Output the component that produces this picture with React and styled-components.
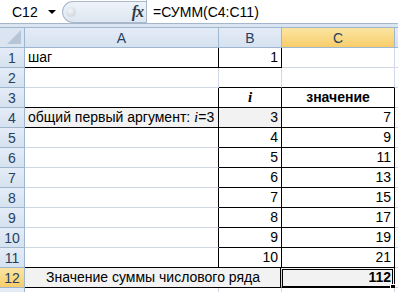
import styled, { createGlobalStyle, css } from "styled-components";

const GlobalStyle = createGlobalStyle`
  body {
    margin: 0;
    overflow: hidden;
    background: #fff;
    font-family: "Liberation Sans", Arial, sans-serif;
  }
`;

const Window = styled.div`
  width: 398px;
  height: 292px;
  overflow: hidden;
  background: #dbe5f1;
`;

const FormulaBar = styled.div`
  display: flex;
  height: 23px;
  background: #fff;
  border-bottom: 1px solid #a6b6ca;
`;

const NameBox = styled.div`
  width: 60px;
  display: flex;
  align-items: center;
  padding-left: 12px;
  box-sizing: border-box;
  font-size: 14px;
  color: #000;
`;

const DropArrow = styled.span`
  margin-left: auto;
  margin-right: 4px;
  width: 0;
  height: 0;
  border-left: 4px solid transparent;
  border-right: 4px solid transparent;
  border-top: 4px solid #000;
`;

const ButtonPanel = styled.div`
  width: 84px;
  margin: 1px 0 0 2px;
  display: flex;
  align-items: center;
  background: linear-gradient(#eef3f9, #dde6f1);
  border: 1px solid #a9b8cb;
  border-right: none;
  border-radius: 11px 0 0 11px;
  box-sizing: border-box;
`;

const Knob = styled.span`
  width: 10px;
  height: 10px;
  margin-left: 3px;
  border-radius: 50%;
  background: radial-gradient(circle at 40% 35%, #f4f6f9, #c4ccd6);
`;

const Fx = styled.span`
  margin-left: auto;
  margin-right: 3px;
  font-family: "Liberation Serif", serif;
  font-style: italic;
  font-weight: bold;
  font-size: 16px;
  color: #2d3a4a;
  letter-spacing: -1px;
`;

const FormulaInput = styled.div`
  flex: 1;
  display: flex;
  align-items: center;
  padding-left: 6px;
  border-left: 1px solid #a9b8cb;
  font-size: 14px;
  color: #000;
`;

const Band = styled.div`
  height: 3px;
  background: #dbe5f1;
  border-bottom: 1px solid #9eb6ce;
`;

const Sheet = styled.div`
  display: grid;
  grid-template-columns: 25px 194px 63px 113px 1fr;
  grid-auto-rows: 20px;
  background: #fff;
`;

const headerBg = css`
  background: ${(p) =>
    p.$active
      ? "linear-gradient(#fbe5a2, #f8cd6a)"
      : "linear-gradient(#e4ecf7, #d6e2f0)"};
`;

const Corner = styled.div`
  position: relative;
  background: #dbe5f1;
  border-right: 1px solid #9eb6ce;
  border-bottom: 1px solid #9eb6ce;
  box-sizing: border-box;
`;

const ColHead = styled.div`
  ${headerBg};
  display: flex;
  align-items: center;
  justify-content: center;
  border-right: 1px solid #9eb6ce;
  border-bottom: 1px solid #9eb6ce;
  box-sizing: border-box;
  font-size: 14px;
  color: #27405f;
`;

const RowHead = styled(ColHead)`
  padding-top: 1px;
`;

const Cell = styled.div`
  position: relative;
  display: flex;
  align-items: flex-end;
  justify-content: ${(p) =>
    p.$align === "right" ? "flex-end" : p.$align === "center" ? "center" : "flex-start"};
  grid-column: span ${(p) => p.$span || 1};
  padding: 0 3px 1px;
  box-sizing: border-box;
  background: ${(p) => (p.$fill ? "#f2f2f2" : "#fff")};
  border-right: 1px solid ${(p) => (p.$r ? "#000" : "#d0d7e5")};
  border-bottom: 1px solid ${(p) => (p.$b ? "#000" : "#d0d7e5")};
  font-size: 14px;
  line-height: 17px;
  font-weight: ${(p) => (p.$bold ? "bold" : "normal")};
  color: #000;
  white-space: nowrap;
`;

const MathI = styled.span`
  font-family: "Liberation Serif", serif;
  font-style: italic;
  font-size: 15px;
  font-weight: ${(p) => (p.$bold ? "bold" : "normal")};
`;

const Selection = styled.span`
  position: absolute;
  top: -1px;
  left: -2px;
  right: -1px;
  bottom: -2px;
  border: 3px double #000;
  pointer-events: none;
`;

const FillHandle = styled.span`
  position: absolute;
  right: -4px;
  bottom: -4px;
  width: 4px;
  height: 4px;
  background: #000;
  border: 1px solid #fff;
`;

const cols = ["A", "B", "C", ""];

const body = [
  {
    cells: [
      { text: "шаг", r: 1, b: 1 },
      { text: "1", align: "right", r: 1, b: 1 },
      {},
      {},
    ],
  },
  { cells: [{}, { b: 1 }, { b: 1 }, {}] },
  {
    cells: [
      { r: 1, b: 1 },
      { text: <MathI $bold>i</MathI>, align: "center", r: 1, b: 1 },
      { text: "значение", align: "center", bold: 1, r: 1, b: 1 },
      {},
    ],
  },
  {
    cells: [
      {
        text: (
          <>
            общий первый аргумент:&nbsp;<MathI>i</MathI>=3
          </>
        ),
        fill: 1,
        r: 1,
        b: 1,
      },
      { text: "3", align: "right", fill: 1, r: 1, b: 1 },
      { text: "7", align: "right", r: 1, b: 1 },
      {},
    ],
  },
];

[4, 5, 6, 7, 8, 9, 10].forEach((i, k) => {
  body.push({
    cells: [
      { r: 1, b: k === 6 ? 1 : 0 },
      { text: String(i), align: "right", r: 1, b: 1 },
      { text: String(2 * i + 1), align: "right", r: 1, b: 1 },
      {},
    ],
  });
});

body.push({
  active: true,
  cells: [
    { text: "Значение суммы числового ряда", align: "center", fill: 1, span: 2, b: 1 },
    { text: "112", align: "right", bold: 1, fill: 1, r: 1, b: 1, selected: true },
    {},
  ],
});

// row 13 is only a sliver at the bottom edge, its number isn't visible
body.push({ hideNumber: true, cells: [{}, {}, {}, {}] });

function App() {
  return (
    <Window>
      <GlobalStyle />
      <FormulaBar>
        <NameBox>
          C12
          <DropArrow />
        </NameBox>
        <ButtonPanel>
          <Knob />
          <Fx>fx</Fx>
        </ButtonPanel>
        <FormulaInput>=СУММ(С4:С11)</FormulaInput>
      </FormulaBar>
      <Band />
      <Sheet>
        <Corner>
          <svg width="14" height="14" style={{ position: "absolute", right: 3, bottom: 3 }}>
            <polygon points="14,0 14,14 0,14" fill="#b6c5d8" />
          </svg>
        </Corner>
        {cols.map((c) => (
          <ColHead key={c || "D"} $active={c === "C"}>
            {c}
          </ColHead>
        ))}
        {body.map((row, i) => [
          <RowHead key={`h${i}`} $active={row.active}>
            {row.hideNumber ? "" : i + 1}
          </RowHead>,
          ...row.cells.map((cell, j) => (
            <Cell
              key={`${i}-${j}`}
              $align={cell.align}
              $bold={cell.bold}
              $fill={cell.fill}
              $r={cell.r}
              $b={cell.b}
              $span={cell.span}
            >
              {cell.text}
              {cell.selected && (
                <Selection>
                  <FillHandle />
                </Selection>
              )}
            </Cell>
          )),
        ])}
      </Sheet>
    </Window>
  );
}

export default App;
